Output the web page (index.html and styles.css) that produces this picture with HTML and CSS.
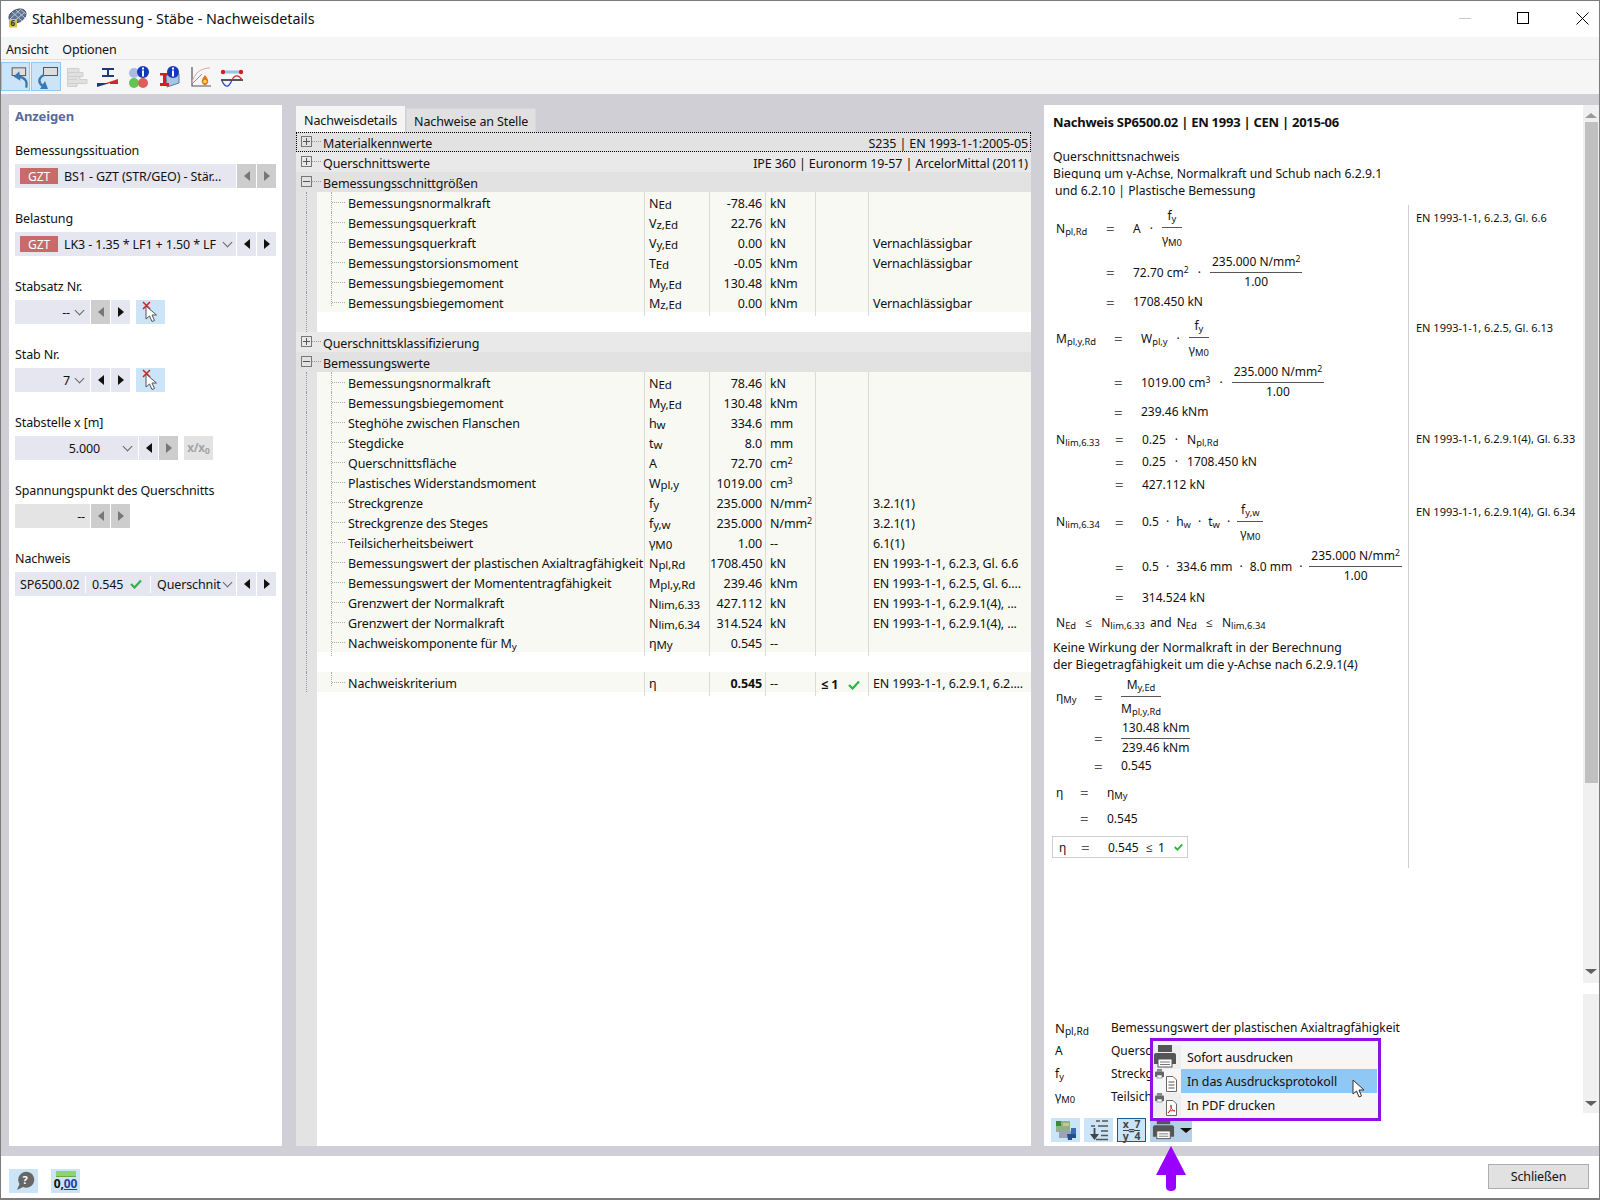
FILE: index.html
```html
<!DOCTYPE html>
<html lang="de">
<head>
    <meta charset="UTF-8">
    <title>Stahlbemessung - Stäbe - Nachweisdetails</title>
    <link rel="stylesheet" href="styles.css">
</head>
<body>
<div class="window">

    <!-- Title bar -->
    <header class="titlebar">
        <svg class="app-icon" width="20" height="20" viewBox="0 0 20 20">
            <path d="M2 9 C2 5 8 1 13 1 C17 1 19 3 19 6 C19 10 13 15 8 15 C4 15 2 13 2 9 Z" fill="#5f7391" stroke="#39465c"/>
            <path d="M5 4 L15 13 M9 2 L18 10 M13 1 L19 6 M3 11 L13 2 M6 14 L18 4" stroke="#b8c6d8" stroke-width="1"/>
            <rect x="2" y="11" width="8" height="8.500" rx="1" fill="#d9c14a"/>
            <text x="3.500" y="18" class="app-icon-text">6</text>
        </svg>
        <span class="title-text">Stahlbemessung - Stäbe - Nachweisdetails</span>
        <div class="window-buttons">
            <span class="win-min"></span>
            <span class="win-max"></span>
            <svg width="13" height="13" viewBox="0 0 13 13"><path d="M0.500 0.500 L12.500 12.500 M12.500 0.500 L0.500 12.500" stroke="#000"/></svg>
        </div>
    </header>

    <nav class="menubar">
        <span>Ansicht</span>
        <span>Optionen</span>
    </nav>

    <!-- Toolbar -->
    <div class="toolbar">
        <button class="tool on first">
            <svg width="28" height="26" viewBox="0 0 28 26">
                <rect x="10.500" y="3.500" width="14" height="8" fill="#ddd" stroke="#555"/>
                <path d="M25 24 C27 17 23 13 17 13" fill="none" stroke="#3a78b0" stroke-width="2.400"/>
                <path d="M12 12.500 L18 7 L19 17 Z" fill="#3a78b0"/>
            </svg>
        </button>
        <button class="tool on">
            <svg width="28" height="26" viewBox="0 0 28 26">
                <rect x="11.500" y="3.500" width="14" height="8" fill="#ddd" stroke="#555"/>
                <path d="M12 11 C6 14 6 19 11 22" fill="none" stroke="#3a78b0" stroke-width="2.400"/>
                <path d="M16 25 L8 25 L13 17 Z" fill="#3a78b0"/>
            </svg>
        </button>
        <button class="tool">
            <svg width="24" height="24" viewBox="0 0 24 24">
                <path d="M2.500 3.500 H14 V7.500 H18 V11.500 H15 V14.500 H22 V18.500 H12 V21.500 H2.500 Z M2.500 7.500 H14 M2.500 11.500 H15 M2.500 14.500 H12 M2.500 18.500 H12" fill="#e0e0e0" stroke="#cfcfcf"/>
            </svg>
        </button>
        <button class="tool">
            <svg width="24" height="24" viewBox="0 0 24 24">
                <path d="M6 3 H18 V5 H13 V10 H18 V12 H6 V10 H11 V5 H6 Z" fill="#1e3a78"/>
                <path d="M1 18 L14 18 L1 22 Z" fill="#1e3a78"/>
                <path d="M22 14 L22 18 L10 18 Z" fill="#c8322e"/>
                <path d="M14 18 H22 V19 H14 Z" fill="#555"/>
            </svg>
        </button>
        <button class="tool">
            <svg width="24" height="24" viewBox="0 0 24 24">
                <circle cx="7" cy="8" r="5" fill="#a9bde4"/>
                <circle cx="7" cy="18" r="5" fill="#5ec84e"/>
                <circle cx="16" cy="18" r="5" fill="#e25a5a"/>
                <circle cx="16" cy="7" r="6" fill="#1338b8"/>
                <rect x="15" y="2.500" width="2" height="2" fill="#fff"/>
                <rect x="15" y="5.500" width="2" height="6" fill="#fff"/>
            </svg>
        </button>
        <button class="tool">
            <svg width="24" height="24" viewBox="0 0 24 24">
                <path d="M8 9 L21 9 L21 18 L9 22 Z" fill="#a8c4e4" stroke="#5a7ca4"/>
                <path d="M2 8 H11 V10.500 H8 V18 H11 V21 H2 V18 H5 V10.500 H2 Z" fill="#e01a1a"/>
                <circle cx="15" cy="7" r="6" fill="#1338b8"/>
                <rect x="14" y="2.500" width="2" height="2" fill="#fff"/>
                <rect x="14" y="5.500" width="2" height="6" fill="#fff"/>
            </svg>
        </button>
        <button class="tool">
            <svg width="24" height="24" viewBox="0 0 24 24">
                <path d="M3 2 V21 H22" fill="none" stroke="#555" stroke-width="1.200"/>
                <path d="M3 19 L13 9" stroke="#7a93b8"/>
                <path d="M3 18 C5 8 12 3 21 3" fill="none" stroke="#e8a0a0"/>
                <path d="M15 20 C11 17 13 14 16 10 C19 14 21 17 17 20 Z" fill="#e8701a"/>
                <circle cx="16" cy="16.500" r="1.800" fill="#ffd84a"/>
            </svg>
        </button>
        <button class="tool">
            <svg width="24" height="24" viewBox="0 0 24 24">
                <rect x="3" y="5.500" width="18" height="3" fill="#9cc0e8"/>
                <circle cx="3" cy="7" r="2.200" fill="#d81e1e"/>
                <circle cx="21" cy="7" r="2.200" fill="#d81e1e"/>
                <path d="M1 15 H23" stroke="#111" stroke-width="1.400"/>
                <path d="M2 16 C6 24 9 22 12 15" fill="none" stroke="#2a44c8" stroke-width="1.300"/>
                <path d="M12 15 C15 9 19 10 22 15" fill="none" stroke="#c8322e" stroke-width="1.300"/>
            </svg>
        </button>
    </div>

    <main class="workspace">

        <!-- Left filter panel -->
        <aside class="filters">
            <h2 class="filters-title">Anzeigen</h2>

            <div class="filter">
                <label>Bemessungssituation</label>
                <div class="combo">
                    <div class="field field-wide"><span class="badge">GZT</span><span class="field-text">BS1 - GZT (STR/GEO) - Stär...</span></div>
                    <span class="spin off"><i class="arrow left"></i></span>
                    <span class="spin off"><i class="arrow right"></i></span>
                </div>
            </div>

            <div class="filter">
                <label>Belastung</label>
                <div class="combo">
                    <div class="field field-wide"><span class="badge">GZT</span><span class="field-text">LK3 - 1.35 * LF1 + 1.50 * LF</span><i class="chev"></i></div>
                    <span class="spin"><i class="arrow left"></i></span>
                    <span class="spin"><i class="arrow right"></i></span>
                </div>
            </div>

            <div class="filter">
                <label>Stabsatz Nr.</label>
                <div class="combo">
                    <div class="field field-num"><span class="field-value">--</span><i class="chev"></i></div>
                    <span class="spin off"><i class="arrow left"></i></span>
                    <span class="spin"><i class="arrow right"></i></span>
                    <span class="pick">
                        <svg width="20" height="22" viewBox="0 0 20 22">
                            <path d="M2 1 L9 8 M9 1 L2 8" stroke="#e02020" stroke-width="1.600"/>
                            <path d="M5 5 L5 18 L8.500 15 L11 20.500 L13.500 19.500 L11 14 L15.500 14 Z" fill="#fff" stroke="#555"/>
                        </svg>
                    </span>
                </div>
            </div>

            <div class="filter">
                <label>Stab Nr.</label>
                <div class="combo">
                    <div class="field field-num"><span class="field-value">7</span><i class="chev"></i></div>
                    <span class="spin"><i class="arrow left"></i></span>
                    <span class="spin"><i class="arrow right"></i></span>
                    <span class="pick">
                        <svg width="20" height="22" viewBox="0 0 20 22">
                            <path d="M2 1 L9 8 M9 1 L2 8" stroke="#e02020" stroke-width="1.600"/>
                            <path d="M5 5 L5 18 L8.500 15 L11 20.500 L13.500 19.500 L11 14 L15.500 14 Z" fill="#fff" stroke="#555"/>
                        </svg>
                    </span>
                </div>
            </div>

            <div class="filter">
                <label>Stabstelle x [m]</label>
                <div class="combo">
                    <div class="field field-pos"><span class="field-value">5.000</span><i class="chev"></i></div>
                    <span class="spin"><i class="arrow left"></i></span>
                    <span class="spin off"><i class="arrow right"></i></span>
                    <span class="ratio">x/x<sub>0</sub></span>
                </div>
            </div>

            <div class="filter">
                <label>Spannungspunkt des Querschnitts</label>
                <div class="combo">
                    <div class="field field-num field-off"><span class="field-value">--</span></div>
                    <span class="spin off"><i class="arrow left"></i></span>
                    <span class="spin off"><i class="arrow right"></i></span>
                </div>
            </div>

            <div class="filter">
                <label>Nachweis</label>
                <div class="combo">
                    <div class="field field-wide field-check">
                        <span class="check-id">SP6500.02</span>
                        <span class="check-val">0.545 <svg class="ok" width="12" height="10" viewBox="0 0 12 10"><path d="M1 5 L4.500 8.500 L11 1.500" fill="none" stroke="#2fb344" stroke-width="2.200"/></svg></span>
                        <span class="check-type">Querschnit</span><i class="chev"></i>
                    </div>
                    <span class="spin"><i class="arrow left"></i></span>
                    <span class="spin"><i class="arrow right"></i></span>
                </div>
            </div>
        </aside>

        <!-- Results tree -->
        <section class="results">
            <div class="tabs">
                <span class="tab active">Nachweisdetails</span>
                <span class="tab">Nachweise an Stelle</span>
            </div>
            <div class="tree">
                <div class="row head focus"><i class="toggle plus"></i><span>Materialkennwerte</span><span class="summary">S235 | EN 1993-1-1:2005-05</span></div>
                <div class="row head alt"><i class="toggle plus"></i><span>Querschnittswerte</span><span class="summary">IPE 360 | Euronorm 19-57 | ArcelorMittal (2011)</span></div>
                <div class="row head"><i class="toggle"></i><span>Bemessungsschnittgrößen</span></div>

                <div class="row item"><span class="name">Bemessungsnormalkraft</span><span class="sym">N<sub>Ed</sub></span><span class="val">-78.46</span><span class="unit">kN</span><span class="lim"></span><span class="note"></span></div>
                <div class="row item"><span class="name">Bemessungsquerkraft</span><span class="sym">V<sub>z,Ed</sub></span><span class="val">22.76</span><span class="unit">kN</span><span class="lim"></span><span class="note"></span></div>
                <div class="row item"><span class="name">Bemessungsquerkraft</span><span class="sym">V<sub>y,Ed</sub></span><span class="val">0.00</span><span class="unit">kN</span><span class="lim"></span><span class="note">Vernachlässigbar</span></div>
                <div class="row item"><span class="name">Bemessungstorsionsmoment</span><span class="sym">T<sub>Ed</sub></span><span class="val">-0.05</span><span class="unit">kNm</span><span class="lim"></span><span class="note">Vernachlässigbar</span></div>
                <div class="row item"><span class="name">Bemessungsbiegemoment</span><span class="sym">M<sub>y,Ed</sub></span><span class="val">130.48</span><span class="unit">kNm</span><span class="lim"></span><span class="note"></span></div>
                <div class="row item last"><span class="name">Bemessungsbiegemoment</span><span class="sym">M<sub>z,Ed</sub></span><span class="val">0.00</span><span class="unit">kNm</span><span class="lim"></span><span class="note">Vernachlässigbar</span></div>
                <div class="row blank"></div>

                <div class="row head alt"><i class="toggle plus"></i><span>Querschnittsklassifizierung</span></div>
                <div class="row head"><i class="toggle"></i><span>Bemessungswerte</span></div>

                <div class="row item"><span class="name">Bemessungsnormalkraft</span><span class="sym">N<sub>Ed</sub></span><span class="val">78.46</span><span class="unit">kN</span><span class="lim"></span><span class="note"></span></div>
                <div class="row item"><span class="name">Bemessungsbiegemoment</span><span class="sym">M<sub>y,Ed</sub></span><span class="val">130.48</span><span class="unit">kNm</span><span class="lim"></span><span class="note"></span></div>
                <div class="row item"><span class="name">Steghöhe zwischen Flanschen</span><span class="sym">h<sub>w</sub></span><span class="val">334.6</span><span class="unit">mm</span><span class="lim"></span><span class="note"></span></div>
                <div class="row item"><span class="name">Stegdicke</span><span class="sym">t<sub>w</sub></span><span class="val">8.0</span><span class="unit">mm</span><span class="lim"></span><span class="note"></span></div>
                <div class="row item"><span class="name">Querschnittsfläche</span><span class="sym">A</span><span class="val">72.70</span><span class="unit">cm<sup>2</sup></span><span class="lim"></span><span class="note"></span></div>
                <div class="row item"><span class="name">Plastisches Widerstandsmoment</span><span class="sym">W<sub>pl,y</sub></span><span class="val">1019.00</span><span class="unit">cm<sup>3</sup></span><span class="lim"></span><span class="note"></span></div>
                <div class="row item"><span class="name">Streckgrenze</span><span class="sym">f<sub>y</sub></span><span class="val">235.000</span><span class="unit">N/mm<sup>2</sup></span><span class="lim"></span><span class="note">3.2.1(1)</span></div>
                <div class="row item"><span class="name">Streckgrenze des Steges</span><span class="sym">f<sub>y,w</sub></span><span class="val">235.000</span><span class="unit">N/mm<sup>2</sup></span><span class="lim"></span><span class="note">3.2.1(1)</span></div>
                <div class="row item"><span class="name">Teilsicherheitsbeiwert</span><span class="sym">γ<sub>M0</sub></span><span class="val">1.00</span><span class="unit">--</span><span class="lim"></span><span class="note">6.1(1)</span></div>
                <div class="row item"><span class="name">Bemessungswert der plastischen Axialtragfähigkeit</span><span class="sym">N<sub>pl,Rd</sub></span><span class="val">1708.450</span><span class="unit">kN</span><span class="lim"></span><span class="note">EN 1993-1-1, 6.2.3, Gl. 6.6</span></div>
                <div class="row item"><span class="name">Bemessungswert der Momententragfähigkeit</span><span class="sym">M<sub>pl,y,Rd</sub></span><span class="val">239.46</span><span class="unit">kNm</span><span class="lim"></span><span class="note">EN 1993-1-1, 6.2.5, Gl. 6....</span></div>
                <div class="row item"><span class="name">Grenzwert der Normalkraft</span><span class="sym">N<sub>lim,6.33</sub></span><span class="val">427.112</span><span class="unit">kN</span><span class="lim"></span><span class="note">EN 1993-1-1, 6.2.9.1(4), ...</span></div>
                <div class="row item"><span class="name">Grenzwert der Normalkraft</span><span class="sym">N<sub>lim,6.34</sub></span><span class="val">314.524</span><span class="unit">kN</span><span class="lim"></span><span class="note">EN 1993-1-1, 6.2.9.1(4), ...</span></div>
                <div class="row item"><span class="name">Nachweiskomponente für M<sub>y</sub></span><span class="sym">η<sub>My</sub></span><span class="val">0.545</span><span class="unit">--</span><span class="lim"></span><span class="note"></span></div>
                <div class="row blank"></div>
                <div class="row item last"><span class="name">Nachweiskriterium</span><span class="sym">η</span><span class="val strong">0.545</span><span class="unit">--</span><span class="lim strong">≤ 1 <svg class="ok" width="12" height="10" viewBox="0 0 12 10"><path d="M1 5 L4.500 8.500 L11 1.500" fill="none" stroke="#2fb344" stroke-width="2.200"/></svg></span><span class="note">EN 1993-1-1, 6.2.9.1, 6.2....</span></div>
            </div>
        </section>

        <!-- Report panel -->
        <section class="report-panel">
            <div class="report-pane">
                <div class="report">
                    <h3 class="report-title">Nachweis SP6500.02 | EN 1993 | CEN | 2015-06</h3>
                    <p class="report-text intro">Querschnittsnachweis</p>
                    <p class="report-text clipped">Biegung um y-Achse, Normalkraft und Schub nach 6.2.9.1</p>
                    <p class="report-text nudge">und 6.2.10 | Plastische Bemessung</p>

                    <div class="sheet">
                        <div class="calc sym-pl">
                            <div class="lines">
                                <div class="line tall"><span>N<sub>pl,Rd</sub></span><span class="eq">=</span>
                                    <span class="expr"><span>A</span><span>·</span><span class="frac"><span class="num">f<sub>y</sub></span><span class="den">γ<sub>M0</sub></span></span></span></div>
                                <div class="line mid"><span></span><span class="eq">=</span>
                                    <span class="expr"><span>72.70 cm<sup>2</sup></span><span>·</span><span class="frac tight"><span class="num">235.000 N/mm<sup>2</sup></span><span class="den">1.00</span></span></span></div>
                                <div class="line low"><span></span><span class="eq">=</span><span class="expr"><span>1708.450 kN</span></span></div>
                            </div>
                            <div class="ref">EN 1993-1-1, 6.2.3, Gl. 6.6</div>
                        </div>

                        <div class="calc sym-my gap-6">
                            <div class="lines">
                                <div class="line tall"><span>M<sub>pl,y,Rd</sub></span><span class="eq">=</span>
                                    <span class="expr"><span>W<sub>pl,y</sub></span><span>·</span><span class="frac"><span class="num">f<sub>y</sub></span><span class="den">γ<sub>M0</sub></span></span></span></div>
                                <div class="line mid"><span></span><span class="eq">=</span>
                                    <span class="expr"><span>1019.00 cm<sup>3</sup></span><span>·</span><span class="frac tight"><span class="num">235.000 N/mm<sup>2</sup></span><span class="den">1.00</span></span></span></div>
                                <div class="line low"><span></span><span class="eq">=</span><span class="expr"><span>239.46 kNm</span></span></div>
                            </div>
                            <div class="ref">EN 1993-1-1, 6.2.5, Gl. 6.13</div>
                        </div>

                        <div class="calc sym-lim gap-9">
                            <div class="lines">
                                <div class="line even"><span>N<sub>lim,6.33</sub></span><span class="eq">=</span>
                                    <span class="expr"><span>0.25</span><span>·</span><span>N<sub>pl,Rd</sub></span></span></div>
                                <div class="line even"><span></span><span class="eq">=</span>
                                    <span class="expr"><span>0.25</span><span>·</span><span>1708.450 kN</span></span></div>
                                <div class="line even"><span></span><span class="eq">=</span><span class="expr"><span>427.112 kN</span></span></div>
                            </div>
                            <div class="ref ref-high">EN 1993-1-1, 6.2.9.1(4), Gl. 6.33</div>
                        </div>

                        <div class="calc sym-lim gap-3">
                            <div class="lines">
                                <div class="line tall"><span>N<sub>lim,6.34</sub></span><span class="eq">=</span>
                                    <span class="expr dense"><span>0.5</span><span>·</span><span>h<sub>w</sub></span><span>·</span><span>t<sub>w</sub></span><span>·</span><span class="frac"><span class="num">f<sub>y,w</sub></span><span class="den">γ<sub>M0</sub></span></span></span></div>
                                <div class="line mid-plus"><span></span><span class="eq">=</span>
                                    <span class="expr dense"><span>0.5</span><span>·</span><span>334.6 mm</span><span>·</span><span>8.0 mm</span><span>·</span><span class="frac tight"><span class="num">235.000 N/mm<sup>2</sup></span><span class="den">1.00</span></span></span></div>
                                <div class="line low-short"><span></span><span class="eq">=</span><span class="expr"><span>314.524 kN</span></span></div>
                            </div>
                            <div class="ref">EN 1993-1-1, 6.2.9.1(4), Gl. 6.34</div>
                        </div>

                        <div class="inequality">N<sub>Ed</sub> <i>≤</i> N<sub>lim,6.33</sub> <span>and</span> N<sub>Ed</sub> <i>≤</i> N<sub>lim,6.34</sub></div>

                        <p class="report-text remark">Keine Wirkung der Normalkraft in der Berechnung</p>
                        <p class="report-text remark-next">der Biegetragfähigkeit um die y-Achse nach 6.2.9.1(4)</p>

                        <div class="calc sym-eta gap-1">
                            <div class="lines">
                                <div class="line tall-less"><span>η<sub>My</sub></span><span class="eq">=</span>
                                    <span class="expr"><span class="frac wide"><span class="num">M<sub>y,Ed</sub></span><span class="den">M<sub>pl,y,Rd</sub></span></span></span></div>
                                <div class="line mid-less"><span></span><span class="eq">=</span>
                                    <span class="expr"><span class="frac tight wide"><span class="num">130.48 kNm</span><span class="den">239.46 kNm</span></span></span></div>
                                <div class="line even gap-3"><span></span><span class="eq">=</span><span class="expr"><span>0.545</span></span></div>
                            </div>
                        </div>

                        <div class="calc sym-short gap-6">
                            <div class="lines">
                                <div class="line low-even"><span>η</span><span class="eq">=</span><span class="expr"><span>η<sub>My</sub></span></span></div>
                                <div class="line low-even spaced"><span></span><span class="eq">=</span><span class="expr"><span>0.545</span></span></div>
                            </div>
                        </div>

                        <div class="result-box">
                            <span class="rb-sym">η</span><span class="eq">=</span><span class="rb-val">0.545</span><span class="rb-le">≤ 1</span>
                            <svg width="9" height="8" viewBox="0 0 12 10"><path d="M1 5 L4.500 8.500 L11 1.500" fill="none" stroke="#2fb344" stroke-width="2.400"/></svg>
                        </div>
                    </div>
                </div>
                <div class="scrollbar">
                    <i class="arrow up"></i>
                    <span class="thumb"></span>
                    <i class="arrow down"></i>
                </div>
            </div>

            <div class="report-foot">
                <div class="legend-pane">
                    <div class="legend">
                        <span class="legend-sym large">N<sub>pl,Rd</sub></span><span>Bemessungswert der plastischen Axialtragfähigkeit</span>
                        <span class="legend-sym">A</span><span>Querschnittsfläche</span>
                        <span class="legend-sym">f<sub>y</sub></span><span>Streckgrenze</span>
                        <span class="legend-sym">γ<sub>M0</sub></span><span>Teilsicherheitsbeiwert</span>
                    </div>
                    <div class="scrollbar short"><i class="arrow down"></i></div>
                </div>

                <div class="report-tools">
                    <button class="rtool">
                        <svg width="24" height="22" viewBox="0 0 24 22">
                            <rect x="2" y="2" width="14" height="11" fill="#8fb08a"/>
                            <rect x="2" y="2" width="5" height="5" fill="#3f8a3a"/>
                            <rect x="9" y="4" width="6" height="3" fill="#d8c860"/>
                            <rect x="5" y="12" width="13" height="7" fill="#9aa4b4"/>
                            <path d="M13 15 H22 V19 H18 V21 H14 Z" fill="#24508c"/>
                            <rect x="17" y="9" width="5" height="6" fill="#3a6cb0"/>
                        </svg>
                    </button>
                    <button class="rtool">
                        <svg width="22" height="22" viewBox="0 0 22 22">
                            <path d="M8 2 H12 M14 2 H20 M3 7 H7 M10 7 H20 M13 12 H20 M13 16.500 H20 M8 20.500 H20" stroke="#555" stroke-width="1.300"/>
                            <path d="M6.500 9 V17" stroke="#444" stroke-width="1.800"/>
                            <path d="M2 15 H11 L6.500 21 Z" fill="#444"/>
                        </svg>
                    </button>
                    <button class="rtool boxed"><span class="xy"><span class="xy-frac"><span>x</span><span>y</span></span>=<span class="xy-frac"><span>7</span><span>4</span></span></span></button>
                    <button class="rtool printer">
                        <svg width="24" height="24" viewBox="0 0 24 24">
                            <rect x="5" y="0" width="14" height="6" fill="#555"/>
                            <path d="M1 9 Q1 7 3 7 H21 Q23 7 23 9 V19 H1 Z" fill="#555"/>
                            <rect x="5" y="13" width="14" height="8" fill="#fff" stroke="#555"/>
                            <path d="M7 16 H17 M7 18.500 H17" stroke="#777"/>
                        </svg>
                        <i class="arrow down dark"></i>
                    </button>
                </div>

                <!-- Print menu -->
                <div class="print-menu">
                    <div class="print-item">
                        <span class="print-icon">
                            <svg width="24" height="24" viewBox="0 0 24 24">
                                <rect x="5" y="0" width="14" height="7" fill="#555"/>
                                <path d="M1 10 Q1 8 3 8 H21 Q23 8 23 10 V19 H1 Z" fill="#555"/>
                                <rect x="5" y="14" width="14" height="8" fill="#fff" stroke="#555"/>
                                <path d="M7 17 H17 M7 19.500 H17" stroke="#777"/>
                            </svg>
                        </span>
                        <span>Sofort ausdrucken</span>
                    </div>
                    <div class="print-item selected">
                        <span class="print-icon">
                            <svg width="26" height="24" viewBox="0 0 26 24">
                                <rect x="4" y="0" width="5" height="2.500" fill="#888"/>
                                <path d="M2 3.500 Q2 2.500 3 2.500 H10 Q11 2.500 11 3.500 V8 H2 Z" fill="#666"/>
                                <rect x="4" y="6" width="5" height="3" fill="#fff" stroke="#666" stroke-width="0.600"/>
                                <path d="M13.500 7.500 H20 L23.500 11 V22.500 H13.500 Z" fill="#fff" stroke="#666"/>
                                <path d="M15.500 13 H21.500 M15.500 16 H21.500 M15.500 19 H21.500" stroke="#555"/>
                            </svg>
                        </span>
                        <span>In das Ausdrucksprotokoll</span>
                    </div>
                    <div class="print-item">
                        <span class="print-icon">
                            <svg width="26" height="24" viewBox="0 0 26 24">
                                <rect x="4" y="0" width="5" height="2.500" fill="#888"/>
                                <path d="M2 3.500 Q2 2.500 3 2.500 H10 Q11 2.500 11 3.500 V8 H2 Z" fill="#666"/>
                                <rect x="4" y="6" width="5" height="3" fill="#fff" stroke="#666" stroke-width="0.600"/>
                                <path d="M13.500 7.500 H20 L23.500 11 V22.500 H13.500 Z" fill="#fff" stroke="#666"/>
                                <path d="M15 20 C18 17 19 13 18 12 C17 12 18 17 22 18 C18 17 16 18 15 20 Z" fill="none" stroke="#d8282a"/>
                            </svg>
                        </span>
                        <span>In PDF drucken</span>
                    </div>
                    <svg class="print-cursor" width="14" height="20" viewBox="0 0 14 20">
                        <path d="M1 1 V15 L4.500 12 L7 18 L9.500 17 L7 11 L12 11 Z" fill="#fff" stroke="#333"/>
                    </svg>
                </div>
            </div>
        </section>
    </main>

    <!-- Bottom bar -->
    <footer class="statusbar">
        <button class="status-btn">
            <svg width="22" height="22" viewBox="0 0 22 22">
                <path d="M4 20 L6.500 14 A8 8 0 1 1 10 17 Z" fill="#666"/>
                <text x="9.500" y="14" class="help-mark">?</text>
            </svg>
        </button>
        <button class="status-btn decimals"><span class="dec-bar"></span><span class="dec-text">0,<u>00</u></span></button>
        <button class="close-btn">Schließen</button>
    </footer>

    <!-- Annotation arrow -->
    <svg class="callout" width="32" height="46" viewBox="0 0 32 46">
        <path d="M16 0 L31 29 L21 29 L21 41 Q21 45 16 45 Q11 45 11 41 L11 29 L1 29 Z" fill="#9a00ff"/>
    </svg>
</div>
</body>
</html>
```

FILE: styles.css
```css
/* General reset */
* {
    margin: 0;
    padding: 0;
    box-sizing: border-box;
}

html, body {
    width: 1600px;
    height: 1200px;
    overflow: hidden;
}

body {
    font-family: "Noto Sans", "Open Sans", sans-serif;
    font-size: 12.5px;
    letter-spacing: -0.12px;
    color: #111;
    background-color: #fff;
}

button {
    border: none;
    font: inherit;
    letter-spacing: inherit;
    color: inherit;
    background: none;
}

sub {
    font-size: 0.78em;
    line-height: 0;
    vertical-align: -0.18em;
}

sup {
    font-size: 0.72em;
    line-height: 0;
    vertical-align: 0.5em;
}

.window {
    position: relative;
    display: flex;
    flex-direction: column;
    width: 1600px;
    height: 1200px;
    border: 1px solid #7c7c7c;
    border-bottom-width: 2px;
}

/* Title bar */
.titlebar {
    display: flex;
    align-items: center;
    height: 36px;
    padding: 0 0 2px 6px;
    background-color: #fff;
}

.app-icon {
    margin-right: 5px;
}

.app-icon-text {
    font-size: 8px;
    font-weight: bold;
    fill: #333;
}

.title-text {
    font-size: 14.300px;
    letter-spacing: 0;
}

.window-buttons {
    display: flex;
    align-items: center;
    margin-left: auto;
    margin-right: 10px;
}

.win-min {
    width: 12px;
    height: 1px;
    margin-right: 46px;
    background-color: #c8c8c8;
}

.win-max {
    width: 12px;
    height: 12px;
    margin-right: 47px;
    border: 1px solid #000;
}

/* Menu and toolbar */
.menubar {
    display: flex;
    gap: 14px;
    align-items: center;
    height: 23px;
    padding: 2px 0 0 5px;
    background-color: #f6f6f6;
    border-bottom: 1px solid #e4e4e4;
}

.toolbar {
    display: flex;
    gap: 1px;
    height: 34px;
    padding-top: 2px;
    background-color: #f6f6f6;
}

.tool {
    display: flex;
    align-items: center;
    justify-content: center;
    width: 30px;
    height: 29px;
    border: 1px solid transparent;
}

.tool.first {
    width: 29px;
}

.tool.on {
    background-color: #cbe4f8;
    border-color: #90c8f0;
}

/* Main area */
.workspace {
    display: flex;
    flex: 1;
    min-height: 0;
    padding: 11px 0 10px 8px;
    background-color: #d0cfd5;
}

.filters {
    flex: none;
    width: 273px;
    padding: 3px 6px;
    background-color: #fff;
}

.filters-title {
    height: 33px;
    font-size: 13px;
    line-height: 16px;
    color: #5a6a9a;
}

.filter {
    height: 68px;
}

.filter label {
    display: block;
    height: 23px;
    line-height: 20px;
}

.combo {
    display: flex;
    gap: 1px;
    height: 24px;
}

.field {
    display: flex;
    align-items: center;
    overflow: hidden;
    white-space: nowrap;
    background-color: #e6e6f0;
}

.field-wide {
    width: 221px;
    padding-left: 5px;
}

.field-num {
    width: 75px;
    justify-content: flex-end;
    padding-right: 5px;
}

.field-pos {
    width: 123px;
    justify-content: flex-end;
    padding-right: 5px;
}

.field-off {
    background-color: #e4e4e4;
}

.field-pos .field-value {
    margin-right: 18px;
}

.field-text {
    flex: 1;
    margin-left: 6px;
    overflow: hidden;
}

.badge {
    flex: none;
    width: 38px;
    height: 16px;
    font-size: 12px;
    line-height: 17px;
    text-align: center;
    color: #fff;
    background-color: #c96a6a;
}

.chev {
    flex: none;
    width: 7px;
    height: 7px;
    margin: -3px 2px 0 6px;
    border-right: 1px solid #666;
    border-bottom: 1px solid #666;
    transform: rotate(45deg);
}

.field-wide .chev {
    margin: -3px 5px 0 2px;
}

.spin {
    display: flex;
    flex: none;
    align-items: center;
    justify-content: center;
    width: 19px;
    background-color: #e6e6f0;
}

.spin.off {
    background-color: #cdcdcd;
}

.arrow {
    display: block;
    width: 0;
    height: 0;
    border-style: solid;
    border-color: transparent;
}

.arrow.left {
    border-width: 5px 6px 5px 0;
    border-right-color: #111;
}

.arrow.right {
    border-width: 5px 0 5px 6px;
    border-left-color: #111;
}

.arrow.up {
    border-width: 0 6px 5px;
    border-bottom-color: #9a9a9a;
}

.arrow.down {
    border-width: 5px 6px 0;
    border-top-color: #606060;
}

.spin.off .arrow.left {
    border-right-color: #777;
}

.spin.off .arrow.right {
    border-left-color: #777;
}

.pick {
    display: flex;
    align-items: center;
    justify-content: center;
    width: 29px;
    margin-left: 5px;
    background-color: #cbe4f8;
}

.ratio {
    width: 29px;
    margin-left: 5px;
    font-size: 11.500px;
    font-weight: bold;
    line-height: 23px;
    text-align: center;
    color: #a4a4a4;
    background-color: #e3e3e3;
}

.field-check {
    padding-left: 5px;
}

.check-id {
    width: 66px;
    flex: none;
    border-right: 1px solid #fff;
}

.check-val {
    display: flex;
    flex: none;
    align-items: center;
    gap: 7px;
    width: 65px;
    padding-left: 6px;
    border-right: 1px solid #fff;
}

.check-type {
    flex: 1;
    margin-left: 6px;
    overflow: hidden;
}

.ok {
    flex: none;
}

/* Results tree */
.results {
    display: flex;
    flex: none;
    flex-direction: column;
    width: 735px;
    margin-left: 14px;
}

.tabs {
    display: flex;
    align-items: flex-end;
    height: 27px;
}

.tab {
    width: 130px;
    height: 24px;
    padding-left: 7px;
    margin-left: 1px;
    line-height: 25px;
    background-color: #e0e0e0;
    border: 1px solid #d8d8d8;
    border-bottom: none;
}

.tab.active {
    width: 109px;
    height: 26px;
    margin-left: 0;
    line-height: 27px;
    background-color: #f5f5f5;
    border-color: #f5f5f5;
}

.tree {
    flex: 1;
    background: linear-gradient(#e3e3e3, #e3e3e3) left top / 21px 100% no-repeat #fff;
}

.row {
    position: relative;
    height: 20px;
    line-height: 24px;
    white-space: nowrap;
}

.head {
    display: flex;
    align-items: center;
    padding: 3px 0 0 27px;
    line-height: 19px;
    background-color: #e2e2e2;
}

.head.alt {
    background-color: #e9e9e9;
}

.head.focus {
    outline: 1px dotted #000;
    outline-offset: -1px;
}

.summary {
    margin-left: auto;
    padding-right: 3px;
}

.toggle {
    position: absolute;
    top: 4px;
    left: 5px;
    width: 11px;
    height: 11px;
    border: 1px solid #777;
    background: linear-gradient(#555, #555) center / 7px 1px no-repeat;
}

.toggle.plus {
    background:
        linear-gradient(#555, #555) center / 7px 1px no-repeat,
        linear-gradient(#555, #555) center / 1px 7px no-repeat;
}

.toggle::after {
    content: "";
    position: absolute;
    top: 4px;
    left: 10px;
    width: 9px;
    border-top: 1px dotted #999;
}

.item {
    display: grid;
    grid-template-columns: 327px 65px 56px 50px 53px 163px;
    margin-left: 21px;
    background-color: #f8f9f2;
}

.item::before,
.blank::before {
    content: "";
    position: absolute;
    top: 0;
    bottom: 0;
    left: -11px;
    border-left: 1px dotted #999;
}

.blank::before {
    left: 10px;
}

.name {
    position: relative;
    padding-left: 31px;
}

.name::before {
    content: "";
    position: absolute;
    top: 0;
    bottom: 0;
    left: 14px;
    border-left: 1px dotted #aaa;
}

.name::after {
    content: "";
    position: absolute;
    top: 10px;
    left: 15px;
    width: 13px;
    border-top: 1px dotted #aaa;
}

.last .name::before {
    bottom: 10px;
}

.sym, .val, .unit, .lim, .note {
    border-left: 1px solid #dcdcd2;
    overflow: hidden;
}

.sym {
    padding-left: 4px;
}

.sym sub {
    font-size: 0.92em;
    vertical-align: -0.12em;
}

.val {
    padding-right: 3px;
    text-align: right;
}

.unit {
    padding-left: 4px;
}

.lim {
    display: flex;
    align-items: center;
    gap: 10px;
    padding: 2px 0 0 5px;
}

.note {
    padding-left: 4px;
}

.strong {
    font-weight: bold;
}

/* Report */
.report-panel {
    display: flex;
    flex: 1;
    flex-direction: column;
    margin-left: 13px;
    background-color: #fff;
}

.report-pane {
    display: flex;
    height: 878px;
}

.report {
    flex: 1;
    padding: 9px 0 0 9px;
    font-size: 12px;
    letter-spacing: 0;
}

.report-title {
    font-size: 13px;
    line-height: 17px;
    letter-spacing: -0.26px;
}

.report-text {
    height: 17px;
    font-size: 12.200px;
    line-height: 17px;
    overflow: hidden;
    white-space: nowrap;
}

.report-text.intro {
    margin-top: 17px;
}

.report-text.clipped {
    height: 14px;
    margin-bottom: 3px;
}

.report-text.nudge {
    padding-left: 2px;
}

.report-text.remark {
    margin: 7px 0 0 -3px;
}

.report-text.remark-next {
    margin-left: -3px;
}

.sheet {
    margin-top: 6px;
    padding: 0 0 10px 3px;
    background: linear-gradient(#cfcfcf, #cfcfcf) 355px 0 / 1px 100% no-repeat;
}

.calc {
    display: grid;
    grid-template-columns: 352px auto;
}

.gap-1 { margin-top: 1px; }
.gap-3 { margin-top: 3px; }
.gap-6 { margin-top: 6px; }
.gap-9 { margin-top: 9px; }

.sym-pl { --sym-width: 50px; }
.sym-my { --sym-width: 58px; }
.sym-lim { --sym-width: 59px; }
.sym-eta { --sym-width: 38px; }
.sym-short { --sym-width: 24px; }

.line {
    display: grid;
    grid-template-columns: var(--sym-width) 27px auto;
    align-items: center;
}

.line.tall { height: 46px; }
.line.tall-less { height: 44px; }
.line.mid { height: 42px; }
.line.mid-plus { height: 44px; }
.line.mid-less { height: 34px; }
.line.low { height: 16px; }
.line.low-short { height: 14px; }
.line.even { height: 22.500px; }
.line.low-even { height: 18px; }
.line.spaced { margin-top: 8px; }

.eq {
    font-size: 15px;
    line-height: 14px;
    color: #555;
}

.expr {
    display: flex;
    align-items: center;
    gap: 0 9px;
    white-space: nowrap;
}

.expr.dense {
    gap: 0 7px;
}

.frac {
    display: inline-flex;
    flex-direction: column;
    align-items: stretch;
    text-align: center;
}

.frac .num {
    height: 23px;
    padding: 0 4px;
    line-height: 22px;
    border-bottom: 1px solid #555;
}

.frac .den {
    height: 23px;
    line-height: 24px;
}

.frac.tight .num {
    height: 21px;
    padding: 0 2px;
    line-height: 20px;
}

.frac.tight .den {
    height: 20px;
    line-height: 18px;
}

.frac.wide .num {
    padding: 0 1px;
}

.ref {
    padding: 6px 0 0 8px;
    font-size: 11px;
    line-height: 14px;
    white-space: nowrap;
}

.ref-high {
    padding-top: 4px;
}

.inequality {
    height: 18px;
    margin-top: 11px;
    line-height: 18px;
    white-space: pre;
}

.inequality i {
    margin: 0 6px;
    font-style: normal;
}

.inequality span {
    margin: 0 2px;
}

.result-box {
    display: flex;
    align-items: center;
    width: 136px;
    height: 22px;
    margin: 9px 0 0 -4px;
    padding-left: 6px;
    border: 1px solid #cfcfcf;
}

.rb-sym {
    width: 22px;
}

.result-box .eq {
    width: 27px;
}

.rb-val {
    width: 38px;
}

.rb-le {
    width: 28px;
    word-spacing: 2px;
}

.scrollbar {
    display: flex;
    flex: none;
    flex-direction: column;
    align-items: center;
    width: 16px;
    padding-top: 8px;
    background-color: #f0f0f0;
}

.thumb {
    flex: none;
    width: 13px;
    height: 661px;
    margin: 4px 0 186px;
    background-color: #c0c0c0;
}

.scrollbar.short {
    justify-content: flex-end;
    padding: 0 0 7px;
}

/* Report footer */
.report-foot {
    position: relative;
    flex: 1;
    padding-top: 11px;
}

.legend-pane {
    display: flex;
    height: 119px;
}

.legend {
    display: grid;
    flex: 1;
    grid-template-columns: 56px 1fr;
    grid-auto-rows: 23px;
    align-items: center;
    align-content: start;
    padding: 22px 0 0 11px;
    font-size: 12px;
    letter-spacing: 0;
}

.legend-sym.large {
    font-size: 13px;
}

.report-tools {
    display: flex;
    gap: 4px;
    height: 24px;
    margin: 5px 0 0 7px;
}

.rtool {
    display: flex;
    align-items: center;
    justify-content: center;
    width: 29px;
    height: 24px;
    background-color: #cbe4f8;
}

.rtool.boxed {
    border: 1px solid #1a5a90;
}

.rtool.printer {
    gap: 5px;
    width: 42px;
    justify-content: flex-start;
    padding-left: 2px;
    background-color: #b5d0e8;
    overflow: visible;
}

.arrow.dark {
    border-top-color: #111;
}

.xy {
    display: flex;
    align-items: center;
    font-size: 10.500px;
    font-weight: bold;
    line-height: 11px;
    color: #444;
}

.xy-frac {
    display: inline-flex;
    flex-direction: column;
    text-align: center;
}

.xy-frac span:first-child {
    border-bottom: 1px solid #444;
}

/* Print menu */
.print-menu {
    position: absolute;
    top: 55px;
    left: 106px;
    width: 231px;
    height: 83px;
    padding-top: 4px;
    border: 3px solid #8c10e8;
    background-color: #f6f6f6;
}

.print-item {
    display: flex;
    align-items: center;
    height: 24px;
    margin-right: 1px;
    line-height: 27px;
}

.print-item.selected {
    background-color: #90c8f5;
}

.print-icon {
    flex: none;
    width: 28px;
    height: 24px;
    margin-right: 6px;
    background-color: #eee;
}

.print-item.selected .print-icon {
    background-color: #f6f6f6;
}

.print-cursor {
    position: absolute;
    top: 38px;
    left: 199px;
}

/* Bottom bar */
.statusbar {
    display: flex;
    align-items: flex-start;
    gap: 13px;
    height: 42px;
    padding: 13px 10px 0 8px;
    background-color: #fff;
}

.status-btn {
    display: flex;
    flex-direction: column;
    align-items: center;
    justify-content: center;
    width: 29px;
    height: 24px;
    background-color: #cbe4f8;
}

.help-mark {
    font-size: 11px;
    font-weight: bold;
    fill: #fff;
}

.decimals {
    justify-content: flex-start;
    padding-top: 2px;
}

.dec-bar {
    width: 20px;
    height: 6px;
    background-color: #8fd46a;
    border-bottom: 1px solid #6aa84f;
}

.dec-text {
    font-size: 12px;
    font-weight: bold;
    line-height: 14px;
}

.dec-text u {
    color: #2a3f94;
}

.close-btn {
    width: 101px;
    height: 25px;
    margin-top: -5px;
    margin-left: auto;
    background-color: #e1e1e1;
    border: 1px solid #adadad;
}

/* Annotation */
.callout {
    position: absolute;
    top: 1145px;
    left: 1154px;
}
```
